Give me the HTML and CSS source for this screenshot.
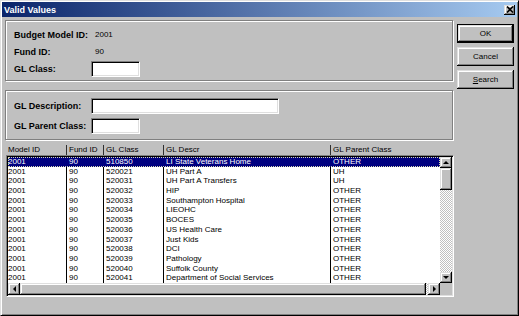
FILE: index.html
```html
<!DOCTYPE html>
<html lang="en">
<head>
  <meta charset="UTF-8" />
  <title>Valid Values</title>
  <link rel="stylesheet" href="styles.css">
</head>
<body>
  <div class="window">
    <div class="titlebar">
      <span class="title">Valid Values</span>
      <span class="close raised">
        <svg width="8" height="7" viewBox="0 0 8 7"><path d="M1 0.5 L7 6.5 M7 0.5 L1 6.5" stroke="#000" stroke-width="1.6" fill="none"/></svg>
      </span>
    </div>

    <div class="body">
      <div class="main">
        <div class="group group-top">
          <div class="field"><span class="label">Budget Model ID:</span><span class="value">2001</span></div>
          <div class="field"><span class="label">Fund ID:</span><span class="value">90</span></div>
          <div class="field"><span class="label">GL Class:</span><input class="input short" type="text"></div>
        </div>

        <div class="group group-filter">
          <div class="field"><span class="label">GL Description:</span><input class="input long" type="text"></div>
          <div class="field"><span class="label">GL Parent Class:</span><input class="input short" type="text"></div>
        </div>

        <div class="list-head cols">
          <span>Model ID</span>
          <span>Fund ID</span>
          <span>GL Class</span>
          <span>GL Descr</span>
          <span>GL Parent Class</span>
        </div>

        <div class="list">
          <div class="rows">
            <div class="row cols selected"><span>2001</span><span>90</span><span>510850</span><span>LI State Veterans Home</span><span>OTHER</span></div>
            <div class="row cols"><span>2001</span><span>90</span><span>520021</span><span>UH Part A</span><span>UH</span></div>
            <div class="row cols"><span>2001</span><span>90</span><span>520031</span><span>UH Part A Transfers</span><span>UH</span></div>
            <div class="row cols"><span>2001</span><span>90</span><span>520032</span><span>HIP</span><span>OTHER</span></div>
            <div class="row cols"><span>2001</span><span>90</span><span>520033</span><span>Southampton Hospital</span><span>OTHER</span></div>
            <div class="row cols"><span>2001</span><span>90</span><span>520034</span><span>LIEOHC</span><span>OTHER</span></div>
            <div class="row cols"><span>2001</span><span>90</span><span>520035</span><span>BOCES</span><span>OTHER</span></div>
            <div class="row cols"><span>2001</span><span>90</span><span>520036</span><span>US Health Care</span><span>OTHER</span></div>
            <div class="row cols"><span>2001</span><span>90</span><span>520037</span><span>Just Kids</span><span>OTHER</span></div>
            <div class="row cols"><span>2001</span><span>90</span><span>520038</span><span>DCI</span><span>OTHER</span></div>
            <div class="row cols"><span>2001</span><span>90</span><span>520039</span><span>Pathology</span><span>OTHER</span></div>
            <div class="row cols"><span>2001</span><span>90</span><span>520040</span><span>Suffolk County</span><span>OTHER</span></div>
            <div class="row cols"><span>2001</span><span>90</span><span>520041</span><span>Department of Social Services</span><span>OTHER</span></div>
          </div>

          <div class="vscroll">
            <div class="sbtn raised"><i class="arrow up"></i></div>
            <div class="thumb-v raised"></div>
            <div class="track"></div>
            <div class="sbtn raised"><i class="arrow down"></i></div>
          </div>

          <div class="hscroll">
            <div class="sbtn raised"><i class="arrow left"></i></div>
            <div class="thumb-h raised"></div>
            <div class="sbtn raised"><i class="arrow right"></i></div>
          </div>

          <div class="corner"></div>
        </div>
      </div>

      <div class="buttons">
        <div class="btn default"><span class="btn-face raised">OK</span></div>
        <div class="btn"><span class="btn-face raised">Cancel</span></div>
        <div class="btn"><span class="btn-face raised"><u>S</u>earch</span></div>
      </div>
    </div>
  </div>
</body>
</html>
```

FILE: styles.css
```css
body {
  margin: 0;
  background: #c0c0c0;
  font-family: "Liberation Sans", Arial, sans-serif;
  font-size: 8px;
  color: #000;
}

.window {
  width: 519px;
  height: 316px;
  box-sizing: border-box;
  padding: 1px;
  background: #c0c0c0;
  border: 1px solid;
  border-color: #dfdfdf #000 #000 #dfdfdf;
  box-shadow: inset 1px 1px #fff, inset -1px -1px #808080;
  display: flex;
  flex-direction: column;
}

.raised {
  background: #c0c0c0;
  box-shadow: inset -1px -1px #000, inset 1px 1px #dfdfdf,
              inset -2px -2px #808080, inset 2px 2px #fff;
}

/* title bar */
.titlebar {
  height: 15px;
  padding: 0 2px;
  display: flex;
  align-items: center;
  justify-content: space-between;
  background: linear-gradient(to right, #0a246a, #a6caf0);
  color: #fff;
}

.title {
  font-weight: bold;
  font-size: 9px;
}

.close {
  width: 11px;
  height: 10px;
  display: flex;
  align-items: center;
  justify-content: center;
}

/* dialog body */
.body {
  flex: 1;
  display: flex;
  gap: 3px;
  padding: 3px 3px 0 3px;
}

.main {
  width: 449px;
  display: flex;
  flex-direction: column;
}

.group {
  width: 448px;
  box-sizing: border-box;
  border: 1px solid #808080;
  box-shadow: inset 1px 1px #fff, 1px 1px #fff;
  padding-left: 8px;
}

.group-top {
  padding-top: 5px;
  padding-bottom: 3px;
}

.group-filter {
  margin-top: 9px;
  padding-top: 6px;
  padding-bottom: 5px;
  display: flex;
  flex-direction: column;
  gap: 3px;
}

.field {
  height: 17px;
  display: flex;
  align-items: center;
}

.label {
  width: 77px;
  font-weight: bold;
  font-size: 9px;
}

.value {
  padding-left: 4px;
  font-size: 8px;
}

.input {
  height: 16px;
  box-sizing: border-box;
  margin: 0;
  padding: 0;
  background: #fff;
  border: 1px solid;
  border-color: #808080 #fff #fff #808080;
  box-shadow: inset 1px 1px #000, inset -1px -1px #dfdfdf;
  outline: none;
}

.input.short { width: 49px; }
.input.long { width: 188px; }

/* list */
.cols {
  display: grid;
  grid-template-columns: 58px 37px 60px 167px 200px;
}

.cols > span {
  padding-left: 2px;
  white-space: nowrap;
  overflow: hidden;
}

.cols > span:first-child {
  padding-left: 0;
}

.list-head {
  margin-top: 5px;
  height: 10px;
  line-height: 10px;
  padding-left: 3px;
  color: #000;
}

.list-head span + span {
  border-left: 1px solid #303030;
}

.list {
  margin-left: 1px;
  width: 448px;
  height: 142px;
  box-sizing: border-box;
  border: 1px solid;
  border-color: #808080 #fff #fff #808080;
  box-shadow: inset 1px 1px #000, inset -1px -1px #dfdfdf;
  padding: 1px;
  display: grid;
  grid-template-columns: 432px 12px;
  grid-template-rows: 126px 12px;
}

.rows {
  background: #fff;
  overflow: hidden;
}

.row {
  height: 9.7px;
  line-height: 9.7px;
}

.row span + span {
  border-left: 1px solid #000;
}

.row.selected {
  background: #000080;
  color: #fff;
  outline: 1px dotted #d8d8b0;
  outline-offset: -1px;
}

.row.selected span + span {
  border-left-color: #000080;
}

.vscroll {
  display: flex;
  flex-direction: column;
}

.sbtn {
  width: 12px;
  height: 11px;
  flex: none;
  display: flex;
  align-items: center;
  justify-content: center;
}

.hscroll .sbtn {
  height: 12px;
}

.thumb-v {
  height: 22px;
  flex: none;
}

.track {
  flex: 1;
  background: repeating-conic-gradient(#fff 0 25%, #c0c0c0 0 50%) 0 0 / 2px 2px;
}

.hscroll {
  display: flex;
  background: repeating-conic-gradient(#fff 0 25%, #c0c0c0 0 50%) 0 0 / 2px 2px;
}

.thumb-h {
  flex: 1;
  margin-right: 2px;
}

.corner {
  background: #c0c0c0;
}

.arrow {
  width: 0;
  height: 0;
  border: 3px solid transparent;
}

.arrow.up { border-bottom-color: #000; border-top-width: 0; }
.arrow.down { border-top-color: #000; border-bottom-width: 0; }
.arrow.left { border-right-color: #000; border-left-width: 0; }
.arrow.right { border-left-color: #000; border-right-width: 0; }

/* buttons */
.buttons {
  width: 57px;
  padding-top: 4px;
  display: flex;
  flex-direction: column;
  gap: 4px;
}

.btn {
  height: 19px;
  display: flex;
}

.btn.default {
  border: 1px solid #000;
  box-sizing: border-box;
}

.btn-face {
  flex: 1;
  display: flex;
  align-items: center;
  justify-content: center;
  font-size: 8px;
}
```
